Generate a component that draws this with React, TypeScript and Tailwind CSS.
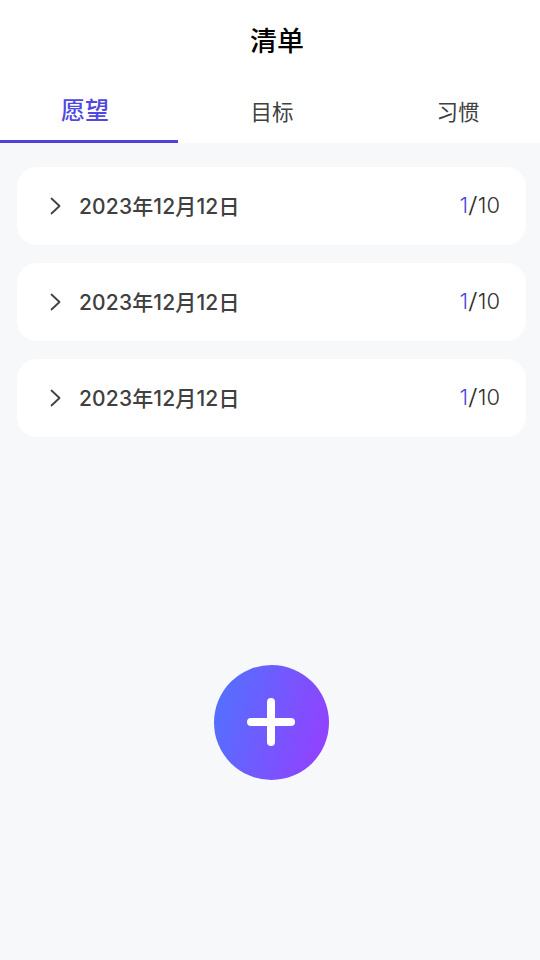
import { useState } from "react";

const tabs = ["愿望", "目标", "习惯"];

const wishes = [
    { id: 1, date: "2023年12月12日", done: 1, total: 10 },
    { id: 2, date: "2023年12月12日", done: 1, total: 10 },
    { id: 3, date: "2023年12月12日", done: 1, total: 10 },
];

function Header() {
    return (
        <h1 className="h-20 pt-[2px] pl-[14px] text-center text-[27px] leading-[80px] font-medium text-black">
            清单
        </h1>
    );
}

function Tabs({ active, onChange }: { active: number; onChange: (index: number) => void }) {
    return (
        <div className="flex h-[63px] justify-between">
            {tabs.map((tab, index) => (
                <button
                    key={tab}
                    onClick={() => onChange(index)}
                    className={
                        index === active
                            ? "w-[178px] border-b-3 border-[#5540d8] pt-[2px] pr-2 text-2xl font-medium text-[#5048e0]"
                            : "w-[178px] border-b-3 border-transparent pt-[4px] pr-[10px] text-[21.5px] text-[#404040] last:w-[164px] last:pr-0"
                    }
                >
                    {tab}
                </button>
            ))}
        </div>
    );
}

function WishCard({ date, done, total }: { date: string; done: number; total: number }) {
    return (
        <div className="flex h-[78px] items-center rounded-[20px] bg-white pr-[26px] pl-[33px]">
            <svg className="h-[18px] w-3" viewBox="0 0 12 18" fill="none" stroke="#404040" strokeWidth="1.8" strokeLinecap="round" strokeLinejoin="round">
                <path d="M1.5 1.5 9.5 9l-8 7.5" />
            </svg>
            <p className="ml-[17px] pt-[2px] text-[21px] font-medium tracking-[0.15px] text-[#404040]">{date}</p>
            <p className="ml-auto pb-[2px] text-[22px] font-light text-[#303030]">
                <span className="text-[#5048e0]">{done}</span>
                <span className="mx-px inline-block scale-x-125">/</span>
                {total}
            </p>
        </div>
    );
}

function AddButton() {
    return (
        <button className="mx-auto mt-[228px] flex size-[115px] items-center justify-center rounded-full bg-linear-[105deg,#5271ff_5%,#9440ff_95%] pb-px">
            <svg className="size-12" viewBox="0 0 48 48" stroke="white" strokeWidth="8" strokeLinecap="round">
                <path d="M24 4v40M4 24h40" />
            </svg>
        </button>
    );
}

function App() {
    const [active, setActive] = useState(0);

    return (
        <div className="flex h-[960px] w-[540px] flex-col bg-[#f6f8fa] font-[Inter,'Noto_Sans_CJK_SC',sans-serif]">
            <div className="bg-white">
                <Header />
                <Tabs active={active} onChange={setActive} />
            </div>
            <div className="flex flex-col gap-[18px] pt-6 pr-[14px] pl-[17px]">
                {wishes.map((wish) => (
                    <WishCard key={wish.id} date={wish.date} done={wish.done} total={wish.total} />
                ))}
            </div>
            <div className="flex pl-[2px]">
                <AddButton />
            </div>
        </div>
    );
}

export default App;
